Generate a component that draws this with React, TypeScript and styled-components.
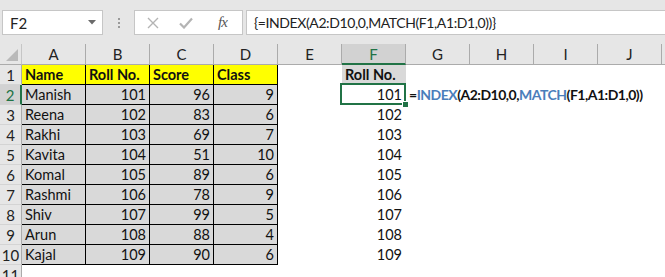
import React from 'react'
import styled, { createGlobalStyle, css } from 'styled-components'

const green = '#217346'
const cellFont = 'Lato, "Liberation Sans", sans-serif'
const uiFont = 'Lato, "Open Sans", sans-serif'

const Global = createGlobalStyle`
  html, body { margin: 0; padding: 0; background: #fff; }
  body { width: 665px; height: 277px; overflow: hidden; }
`

const Toolbar = styled.div`
  height: 44px;
  background: #e6e6e6;
  display: flex;
  align-items: flex-start;
  padding-top: 10px;
  box-sizing: border-box;
`

const NameBox = styled.div`
  margin-left: 2px;
  width: 101px;
  height: 25px;
  box-sizing: border-box;
  background: #fff;
  border: 1px solid #c6c6c6;
  display: flex;
  align-items: center;
  justify-content: space-between;
  padding: 0 6px 0 7px;
  font: 15px ${uiFont};
  color: #222;
`

const Grip = styled.div`
  width: 31px;
  height: 25px;
  display: flex;
  flex-direction: column;
  align-items: center;
  justify-content: center;
  gap: 2px;
  span {
    width: 2px;
    height: 2px;
    background: #9a9a9a;
  }
`

const ButtonBox = styled.div`
  width: 109px;
  height: 25px;
  box-sizing: border-box;
  background: #fff;
  border: 1px solid #c6c6c6;
  display: flex;
  align-items: center;
  padding-left: 12px;
  gap: 20px;
`

const Fx = styled.span`
  font: italic 15px "Liberation Serif", serif;
  color: #555;
  margin-left: 5px;
  letter-spacing: -1px;
`

const FormulaInput = styled.div`
  margin-left: 3px;
  flex: 1;
  height: 25px;
  box-sizing: border-box;
  background: #fff;
  border: 1px solid #c6c6c6;
  border-right: none;
  display: flex;
  align-items: center;
  padding-left: 7px;
  font: 14px ${uiFont};
  letter-spacing: -0.4px;
  color: #222;
  white-space: nowrap;
`

const Sheet = styled.div`
  display: grid;
  grid-template-columns: 22px repeat(10, 64px) 1fr;
  grid-template-rows: 21px repeat(11, 20px);
`

const Corner = styled.div`
  background: #e6e6e6;
  border-right: 1px solid #c6c6c6;
  border-bottom: 1px solid #ababab;
  box-sizing: border-box;
  display: flex;
  align-items: flex-end;
  justify-content: flex-end;
  padding: 0 3px 3px 0;
`

const ColHead = styled.div<{ $active?: boolean }>`
  background: ${p => (p.$active ? '#d2d2d2' : '#e6e6e6')};
  border-right: 1px solid #ababab;
  border-bottom: ${p => (p.$active ? `2px solid ${green}` : '1px solid #ababab')};
  box-sizing: border-box;
  display: flex;
  align-items: center;
  justify-content: center;
  font: 15px ${cellFont};
  color: ${p => (p.$active ? green : '#222')};
`

const RowHead = styled.div<{ $active?: boolean }>`
  background: ${p => (p.$active ? '#d2d2d2' : '#e6e6e6')};
  border-right: ${p => (p.$active ? `2px solid ${green}` : '1px solid #ababab')};
  border-bottom: 1px solid #d4d4d4;
  box-sizing: border-box;
  display: flex;
  align-items: center;
  justify-content: center;
  font: 15px ${cellFont};
  color: ${p => (p.$active ? green : '#222')};
`

type Fill = 'none' | 'yellow' | 'gray'

const Cell = styled.div<{ $fill: Fill; $bold?: boolean; $right?: boolean; $boxed?: boolean; $selected?: boolean }>`
  position: relative;
  box-sizing: border-box;
  border-right: 1px solid ${p => (p.$boxed ? '#000' : 'transparent')};
  border-bottom: 1px solid ${p => (p.$boxed ? '#000' : 'transparent')};
  background: ${p => (p.$fill === 'yellow' ? '#ffff00' : p.$fill === 'gray' ? '#d9d9d9' : '#fff')};
  font: ${p => (p.$bold ? 700 : 400)} 14.5px ${cellFont};
  color: #111;
  display: flex;
  align-items: center;
  justify-content: ${p => (p.$right ? 'flex-end' : 'flex-start')};
  padding: 0 3px 0 3px;
  white-space: nowrap;
  overflow: visible;
  ${p =>
    p.$selected &&
    css`
      &::after {
        content: '';
        position: absolute;
        left: -2px;
        top: -2px;
        right: -1px;
        bottom: -1px;
        border: 2px solid ${green};
        z-index: 2;
      }
      &::before {
        content: '';
        position: absolute;
        right: -4px;
        bottom: -4px;
        width: 5px;
        height: 5px;
        background: ${green};
        border: 1px solid #fff;
        z-index: 3;
      }
    `}
`

const Overflow = styled.span`
  position: relative;
  z-index: 4;
  font-weight: 700;
  font-size: 14px;
  letter-spacing: -0.5px;
  color: #111;
`

const Fn = styled.span`
  color: #4a7ebb;
`

const cols = ['A', 'B', 'C', 'D', 'E', 'F', 'G', 'H', 'I', 'J', '']

const rows: [string, number, number, number][] = [
  ['Manish', 101, 96, 9],
  ['Reena', 102, 83, 6],
  ['Rakhi', 103, 69, 7],
  ['Kavita', 104, 51, 10],
  ['Komal', 105, 89, 6],
  ['Rashmi', 106, 78, 9],
  ['Shiv', 107, 99, 5],
  ['Arun', 108, 88, 4],
  ['Kajal', 109, 90, 6],
]

const formula = (
  <Overflow>
    =<Fn>INDEX</Fn>(A2:D10,0,<Fn>MATCH</Fn>(F1,A1:D1,0))
  </Overflow>
)

function renderRow(r: number) {
  const out: React.ReactNode[] = []
  out.push(
    <RowHead key={`h${r}`} $active={r === 2}>
      {r}
    </RowHead>
  )
  for (let c = 0; c < 11; c++) {
    const key = `${r}-${c}`
    if (r === 1 && c < 4) {
      out.push(
        <Cell key={key} $fill="yellow" $bold $boxed>
          {['Name', 'Roll No.', 'Score', 'Class'][c]}
        </Cell>
      )
    } else if (r >= 2 && r <= 10 && c < 4) {
      const d = rows[r - 2]
      out.push(
        <Cell key={key} $fill="gray" $boxed $right={c > 0}>
          {d[c]}
        </Cell>
      )
    } else if (c === 5 && r === 1) {
      out.push(
        <Cell key={key} $fill="gray" $bold>
          Roll No.
        </Cell>
      )
    } else if (c === 5 && r >= 2 && r <= 10) {
      out.push(
        <Cell key={key} $fill="none" $right $selected={r === 2}>
          {100 + r - 1}
        </Cell>
      )
    } else if (c === 6 && r === 2) {
      out.push(
        <Cell key={key} $fill="none">
          {formula}
        </Cell>
      )
    } else {
      out.push(<Cell key={key} $fill="none" />)
    }
  }
  return out
}

export default function App() {
  return (
    <>
      <Global />
      <Toolbar>
        <NameBox>
          F2
          <svg width="8" height="5" viewBox="0 0 8 5">
            <path d="M0 0 H8 L4 4.5 Z" fill="#6a6a6a" />
          </svg>
        </NameBox>
        <Grip>
          <span />
          <span />
          <span />
        </Grip>
        <ButtonBox>
          <svg width="12" height="12" viewBox="0 0 12 12">
            <path d="M1 1 L11 11 M11 1 L1 11" stroke="#b4b4b4" strokeWidth="1.4" />
          </svg>
          <svg width="14" height="12" viewBox="0 0 14 12">
            <path d="M1 6.5 L5 10.5 L13 1.5" stroke="#b4b4b4" strokeWidth="2.2" fill="none" />
          </svg>
          <Fx>fx</Fx>
        </ButtonBox>
        <FormulaInput>{'{=INDEX(A2:D10,0,MATCH(F1,A1:D1,0))}'}</FormulaInput>
      </Toolbar>
      <Sheet>
        <Corner>
          <svg width="12" height="12" viewBox="0 0 12 12">
            <path d="M12 0 V12 H0 Z" fill="#b9b9b9" />
          </svg>
        </Corner>
        {cols.map((c, i) => (
          <ColHead key={c || i} $active={c === 'F'}>
            {c}
          </ColHead>
        ))}
        {Array.from({ length: 11 }, (_, i) => renderRow(i + 1))}
      </Sheet>
    </>
  )
}
